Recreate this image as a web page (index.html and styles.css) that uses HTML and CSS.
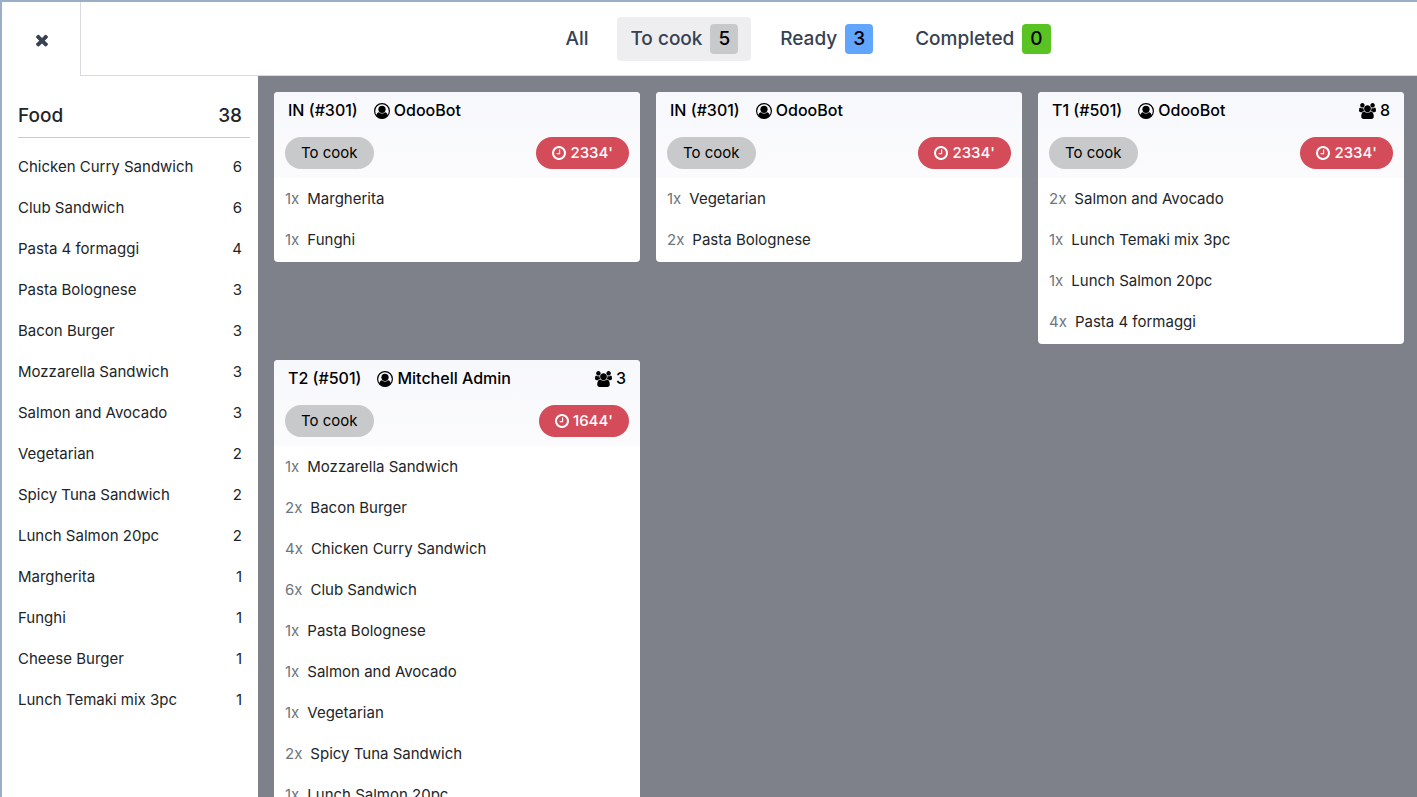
FILE: index.html
```html
<!DOCTYPE html>
<html lang="en">
<head>
    <meta charset="UTF-8">
    <meta name="viewport" content="width=device-width, initial-scale=1.0">
    <title>Preparation Display</title>
    <link rel="stylesheet" href="styles.css">
</head>
<body>
    <svg class="sprite" aria-hidden="true">
        <symbol id="i-times" viewBox="0 0 1792 1792">
            <path d="M1490 1322q0 40-28 68l-136 136q-28 28-68 28t-68-28l-294-294-294 294q-28 28-68 28t-68-28l-136-136q-28-28-28-68t28-68l294-294-294-294q-28-28-28-68t28-68l136-136q28-28 68-28t68 28l294 294 294-294q28-28 68-28t68 28l136 136q28 28 28 68t-28 68l-294 294 294 294q28 28 28 68z"/>
        </symbol>
        <symbol id="i-clock" viewBox="128 128 1536 1536">
            <path d="M1024 544v448q0 14-9 23t-23 9h-320q-14 0-23-9t-9-23v-64q0-14 9-23t23-9h224v-352q0-14 9-23t23-9h64q14 0 23 9t9 23zm416 352q0-148-73-273t-198-198-273-73-273 73-198 198-73 273 73 273 198 198 273 73 273-73 198-198 73-273zm224 0q0 209-103 385.5t-279.5 279.5-385.5 103-385.5-103-279.5-279.5-103-385.5 103-385.5 279.5-279.5 385.5-103 385.5 103 279.5 279.5 103 385.5z"/>
        </symbol>
        <symbol id="i-users" viewBox="0 0 1920 1792">
            <path d="M593 896q-162 5-265 128h-134q-82 0-138-40.5t-56-118.5q0-353 124-353 6 0 43.5 21t97.5 42.5 119 21.5q67 0 133-23-5 37-5 66 0 139 81 256zm1071 637q0 120-73 189.5t-194 69.5h-874q-121 0-194-69.5t-73-189.5q0-53 3.5-103.5t14-109 26.5-108.5 43-97.5 62-81 85.5-53.5 111.5-20q10 0 43 21.5t73 48 107 48 135 21.5 135-21.5 107-48 73-48 43-21.5q61 0 111.5 20t85.5 53.5 62 81 43 97.5 26.5 108.5 14 109 3.5 103.5zm-1024-1277q0 106-75 181t-181 75-181-75-75-181 75-181 181-75 181 75 75 181zm704 384q0 159-112.5 271.5t-271.5 112.5-271.5-112.5-112.5-271.5 112.5-271.5 271.5-112.5 271.5 112.5 112.5 271.5zm576 225q0 78-56 118.5t-138 40.5h-134q-103-123-265-128 81-117 81-256 0-29-5-66 66 23 133 23 59 0 119-21.5t97.5-42.5 43.5-21q124 0 124 353zm-128-609q0 106-75 181t-181 75-181-75-75-181 75-181 181-75 181 75 75 181z"/>
        </symbol>
        <symbol id="i-user" viewBox="0 0 16 16">
            <circle cx="8" cy="8" r="7.4" fill="none" stroke="currentColor" stroke-width="1.2"/>
            <circle cx="8" cy="6.3" r="3.6"/>
            <path d="M5 9.200C3.600 9.300 2.500 10.600 2.200 12.600 3.600 14.500 5.700 15.500 8 15.500s4.400-1 5.800-2.900C13.500 10.600 12.400 9.300 11 9.200 10.200 10.100 9.200 10.500 8 10.500S5.800 10.100 5 9.200z"/>
        </symbol>
    </svg>

    <div class="app">
        <header class="topbar">
            <button class="close" aria-label="Close"><svg><use href="#i-times"/></svg></button>
            <nav class="stages">
                <button class="stage">All</button>
                <button class="stage active">To cook <span class="badge grey">5</span></button>
                <button class="stage">Ready <span class="badge blue">3</span></button>
                <button class="stage">Completed <span class="badge green">0</span></button>
            </nav>
        </header>

        <div class="content">
            <aside class="sidebar">
                <h2 class="category"><span>Food</span><span>38</span></h2>
                <ul class="products">
                    <li><span>Chicken Curry Sandwich</span><span>6</span></li>
                    <li><span>Club Sandwich</span><span>6</span></li>
                    <li><span>Pasta 4 formaggi</span><span>4</span></li>
                    <li><span>Pasta Bolognese</span><span>3</span></li>
                    <li><span>Bacon Burger</span><span>3</span></li>
                    <li><span>Mozzarella Sandwich</span><span>3</span></li>
                    <li><span>Salmon and Avocado</span><span>3</span></li>
                    <li><span>Vegetarian</span><span>2</span></li>
                    <li><span>Spicy Tuna Sandwich</span><span>2</span></li>
                    <li><span>Lunch Salmon 20pc</span><span>2</span></li>
                    <li><span>Margherita</span><span>1</span></li>
                    <li><span>Funghi</span><span>1</span></li>
                    <li><span>Cheese Burger</span><span>1</span></li>
                    <li><span>Lunch Temaki mix 3pc</span><span>1</span></li>
                </ul>
            </aside>

            <main class="board">
                <article class="order">
                    <div class="order-head">
                        <div class="order-info">
                            <span>IN (#301)</span>
                            <span class="user"><svg><use href="#i-user"/></svg>OdooBot</span>
                        </div>
                        <div class="order-status">
                            <span class="pill">To cook</span>
                            <span class="pill late"><svg><use href="#i-clock"/></svg>2334'</span>
                        </div>
                    </div>
                    <ul class="lines">
                        <li><span class="qty">1x</span>Margherita</li>
                        <li><span class="qty">1x</span>Funghi</li>
                    </ul>
                </article>

                <article class="order">
                    <div class="order-head">
                        <div class="order-info">
                            <span>IN (#301)</span>
                            <span class="user"><svg><use href="#i-user"/></svg>OdooBot</span>
                        </div>
                        <div class="order-status">
                            <span class="pill">To cook</span>
                            <span class="pill late"><svg><use href="#i-clock"/></svg>2334'</span>
                        </div>
                    </div>
                    <ul class="lines">
                        <li><span class="qty">1x</span>Vegetarian</li>
                        <li><span class="qty">2x</span>Pasta Bolognese</li>
                    </ul>
                </article>

                <article class="order">
                    <div class="order-head">
                        <div class="order-info">
                            <span>T1 (#501)</span>
                            <span class="user"><svg><use href="#i-user"/></svg>OdooBot</span>
                            <span class="guests"><svg><use href="#i-users"/></svg>8</span>
                        </div>
                        <div class="order-status">
                            <span class="pill">To cook</span>
                            <span class="pill late"><svg><use href="#i-clock"/></svg>2334'</span>
                        </div>
                    </div>
                    <ul class="lines">
                        <li><span class="qty">2x</span>Salmon and Avocado</li>
                        <li><span class="qty">1x</span>Lunch Temaki mix 3pc</li>
                        <li><span class="qty">1x</span>Lunch Salmon 20pc</li>
                        <li><span class="qty">4x</span>Pasta 4 formaggi</li>
                    </ul>
                </article>

                <article class="order">
                    <div class="order-head">
                        <div class="order-info">
                            <span>T2 (#501)</span>
                            <span class="user"><svg><use href="#i-user"/></svg>Mitchell Admin</span>
                            <span class="guests"><svg><use href="#i-users"/></svg>3</span>
                        </div>
                        <div class="order-status">
                            <span class="pill">To cook</span>
                            <span class="pill late"><svg><use href="#i-clock"/></svg>1644'</span>
                        </div>
                    </div>
                    <ul class="lines">
                        <li><span class="qty">1x</span>Mozzarella Sandwich</li>
                        <li><span class="qty">2x</span>Bacon Burger</li>
                        <li><span class="qty">4x</span>Chicken Curry Sandwich</li>
                        <li><span class="qty">6x</span>Club Sandwich</li>
                        <li><span class="qty">1x</span>Pasta Bolognese</li>
                        <li><span class="qty">1x</span>Salmon and Avocado</li>
                        <li><span class="qty">1x</span>Vegetarian</li>
                        <li><span class="qty">2x</span>Spicy Tuna Sandwich</li>
                        <li><span class="qty">1x</span>Lunch Salmon 20pc</li>
                    </ul>
                </article>
            </main>
        </div>
    </div>
</body>
</html>
```
FILE: styles.css
```css
* {
    margin: 0;
    padding: 0;
    box-sizing: border-box;
}

body {
    font-family: Inter, "Liberation Sans", sans-serif;
    font-size: 15px;
    line-height: 24px;
    color: #212529;
    background: white;
}

ul {
    list-style: none;
}

button {
    font: inherit;
    color: inherit;
    background: none;
    border: none;
    cursor: pointer;
}

svg {
    fill: currentColor;
    flex: none;
}

.sprite {
    display: none;
}

.app {
    display: flex;
    flex-direction: column;
    height: 100vh;
    border-top: 2px solid #9aafc6;
    border-left: 2px solid #9aafc6;
}

/* Top bar */
.topbar {
    display: flex;
    flex: none;
    height: 74px;
}

.close {
    display: flex;
    align-items: center;
    justify-content: center;
    width: 78px;
    padding: 2px 0 0 2px;
    color: #374151;
}

.close svg {
    width: 18px;
    height: 18px;
}

.stages {
    flex: 1;
    display: flex;
    align-items: center;
    justify-content: center;
    gap: 16px;
    padding-left: 118px;
    border-left: 1px solid #d8dadd;
    border-bottom: 1px solid #d8dadd;
}

.stage {
    display: flex;
    align-items: center;
    gap: 8px;
    height: 44px;
    padding: 0 13px;
    border-radius: 4px;
    font-size: 19px;
    font-weight: 500;
    color: #374151;
}

.stage.active {
    background: #eeeef0;
}

.badge {
    padding: 0 8px;
    border-radius: 4px;
    line-height: 30px;
    color: black;
}

.badge.grey {
    background: #c8c9cb;
}

.badge.blue {
    background: #61a5fc;
}

.badge.green {
    background: #58c322;
}

/* Sidebar */
.content {
    flex: 1;
    display: flex;
    min-height: 0;
}

.sidebar {
    flex: none;
    width: 256px;
    padding: 16px 8px 16px 16px;
}

.category {
    display: flex;
    justify-content: space-between;
    height: 46px;
    margin-bottom: 8px;
    padding-right: 8px;
    border-bottom: 1px solid #c9cbce;
    font-size: 19px;
    font-weight: 500;
    line-height: 48px;
}

.products li {
    display: flex;
    justify-content: space-between;
    padding-right: 8px;
    line-height: 41px;
}

/* Orders */
.board {
    flex: 1;
    display: grid;
    grid-template-columns: repeat(3, 1fr);
    align-items: start;
    align-content: start;
    gap: 16px;
    padding: 16px 13px 16px 16px;
    background: #7e808a;
    overflow-y: auto;
    scrollbar-width: none;
}

.order {
    padding-bottom: 2px;
    border-radius: 4px;
    background: white;
    overflow: hidden;
}

.order-head {
    background: linear-gradient(#f7f8fc, #fbfbfd);
    color: black;
}

.order-info {
    display: flex;
    gap: 16px;
    padding: 0 14px;
    font-size: 16px;
    font-weight: 500;
    line-height: 37px;
}

.user,
.guests {
    display: flex;
    align-items: center;
    gap: 4px;
}

.guests {
    margin-left: auto;
}

.user svg {
    width: 16px;
    height: 16px;
}

.guests svg {
    width: 17px;
    height: 16px;
}

.order-status {
    display: flex;
    justify-content: space-between;
    padding: 8px 11px 9px;
}

.pill {
    display: flex;
    align-items: center;
    gap: 4px;
    padding: 0 16px;
    border-radius: 16px;
    background: #c8c9cb;
    line-height: 32px;
}

.pill.late {
    background: #d44c59;
    color: white;
    font-weight: 500;
}

.pill svg {
    width: 14px;
    height: 14px;
}

.lines li {
    display: flex;
    gap: 8px;
    padding: 0 11px;
    line-height: 41px;
}

.qty {
    color: #6c757d;
}
```
